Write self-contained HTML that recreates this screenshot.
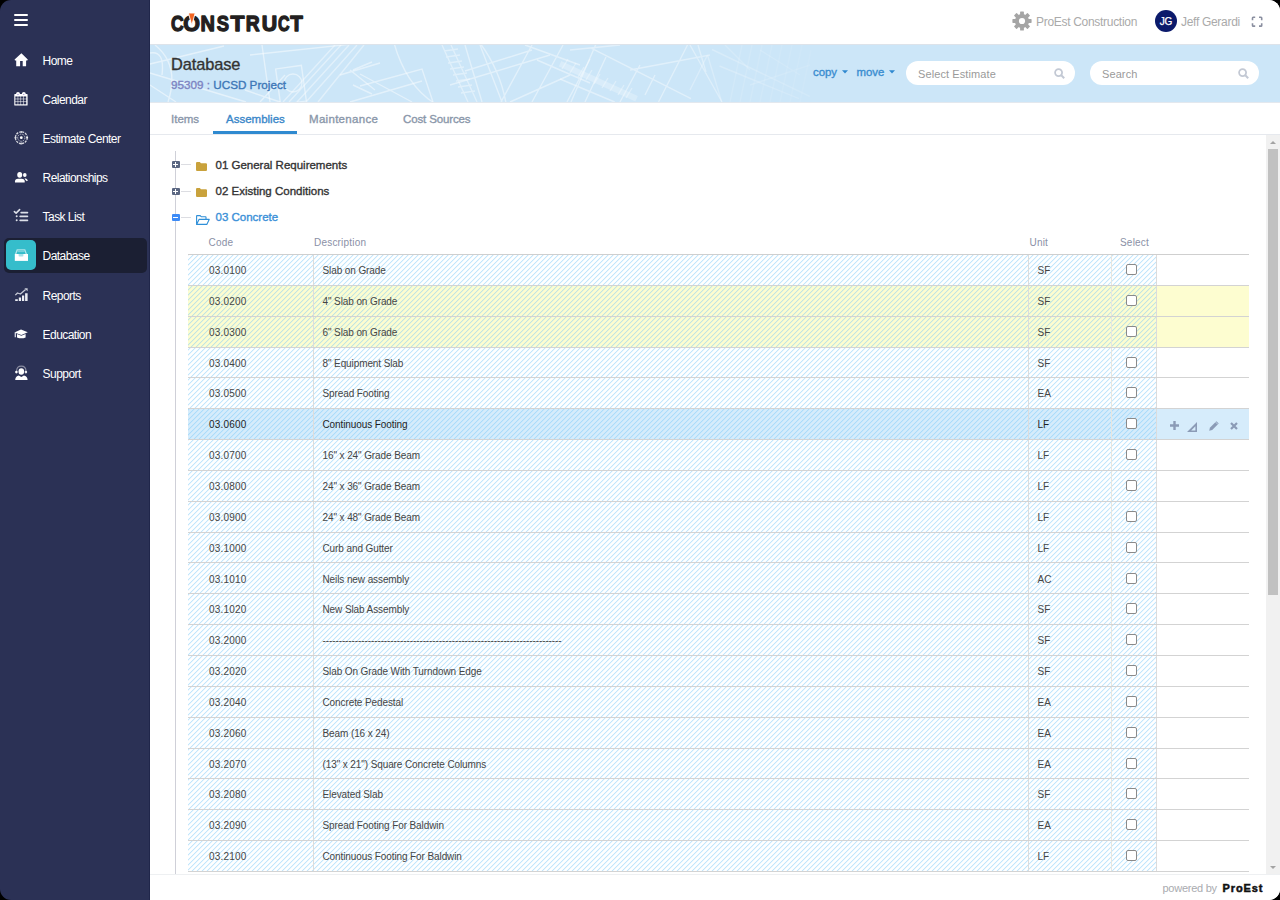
<!DOCTYPE html>
<html><head><meta charset="utf-8"><title>Database - Assemblies</title>
<style>
html,body{margin:0;padding:0;background:#000;width:1280px;height:900px;overflow:hidden}
*{box-sizing:border-box}
#app{position:absolute;left:0;top:0;width:1280px;height:900px;border-radius:11px;overflow:hidden;font-family:"Liberation Sans",sans-serif;color:#333}
#sidebar{position:absolute;left:0;top:0;width:150px;height:900px;background:#2b3155;border-right:1px solid #20264a}
.burger{position:absolute;left:13.5px;top:14px;width:14.5px;height:12px}
.burger i{position:absolute;left:0;width:14.5px;height:2.4px;background:#fff;border-radius:1px}
.nav{position:absolute;left:0;width:150px;height:30px}
.nav .ic{position:absolute;left:13px;top:0;width:16px;height:30px}
.nav .ic svg{position:absolute;left:0;top:7px}
.nav .tx{position:absolute;left:42.6px;top:1px;line-height:30px;font-size:12px;color:#fff;letter-spacing:-0.55px;white-space:nowrap}
.nav.active .bg{position:absolute;left:3.5px;top:-2.5px;width:143.5px;height:35px;background:#1b1f33;border-radius:5px}
.nav.active .tile{position:absolute;left:6px;top:0;width:30px;height:30px;background:#35bdcb;border-radius:5px}
#header{position:absolute;left:150px;top:0;width:1130px;height:44px;background:#fff}
#banner{position:absolute;left:150px;top:44px;width:1130px;height:59px;background:#cce6f8;border-top:1px solid #dde3ea;border-bottom:1px solid #e3e8ee;overflow:hidden}
#tabs{position:absolute;left:150px;top:103px;width:1130px;height:32px;background:#fff;border-bottom:1px solid #e6e9ee}
.tab{position:absolute;top:1px;height:31px;line-height:31px;font-size:11.5px;color:#8a97aa;-webkit-text-stroke:0.35px #8a97aa;white-space:nowrap}
.tab.act{color:#3a87c9;-webkit-text-stroke:0.35px #3a87c9}
.tabline{position:absolute;left:62.5px;top:28px;width:84.5px;height:3px;background:#2f8ad0}
#content{position:absolute;left:150px;top:135px;width:1116px;height:739px;background:#fff;overflow:hidden}
.tree-vline{position:absolute;left:25px;top:16px;width:1px;height:723px;background:#cfd0d8}
.tnode{position:absolute;left:0;height:20px;width:600px}
.tnode.n1{top:19.5px}.tnode.n2{top:46px}.tnode.n3{top:72px}
.pm{position:absolute;left:21.5px;top:6.5px;width:8px;height:7px;background:#5b6782;border-radius:1px}
.pm.minus{background:#3d8bf6}
.pm:before{content:"";position:absolute;left:1.5px;top:3px;width:5px;height:1px;background:#fff}
.pm.plus:after{content:"";position:absolute;left:3.5px;top:1px;width:1px;height:5px;background:#fff}
.hl{position:absolute;left:31px;top:9.5px;width:10px;height:1px;background:#dcdde2}
.fold{position:absolute;left:46px;top:7px}
.fold.open{left:46px;top:8px}
.tl{position:absolute;left:65.5px;top:0;line-height:20px;font-size:11.5px;color:#333;-webkit-text-stroke:0.35px #333;white-space:nowrap}
.tl.blue{color:#3a90d8;-webkit-text-stroke:0.35px #3a90d8}
.thead{position:absolute;left:0;top:98px;height:20px;width:1116px;font-size:10px;color:#8a90a6;letter-spacing:0.2px}
.thead span{position:absolute;top:0;line-height:20px;white-space:nowrap}
.h-code{left:58.6px}.h-desc{left:164px}.h-unit{left:879.5px}.h-sel{left:970px}
#tbl{position:absolute;left:38px;top:119px;width:1061px;height:618px;border-top:1px solid #cfcfcf}
.row{position:absolute;left:0;width:1061px;height:30.85px;border-bottom:1px solid #d3d3d3;font-size:10px;letter-spacing:-0.1px;color:#454545}
.hatch{position:absolute;left:0;top:0;width:968px;height:100%;background:repeating-linear-gradient(-45deg,rgba(150,210,245,.55) 0px,rgba(150,210,245,.55) 1.3px,transparent 1.3px,transparent 3.54px)}
.row>div.c-code,.row>div.c-desc,.row>div.c-unit,.row>div.c-sel{position:absolute;top:0;height:100%;line-height:31px;white-space:nowrap}
.c-code{left:0;width:126px;padding-left:21px;letter-spacing:0.2px;border-right:1px solid #dcdcdc}
.c-desc{left:125px;width:716px;padding-left:9.5px;border-right:1px solid #dcdcdc}
.c-unit{left:841px;width:83px;padding-left:8.6px;border-right:1px solid #e6e6e0}
.c-sel{left:924px;width:45px;border-right:1px solid #dcdcdc}
.cb{position:absolute;left:14.3px;top:9px;width:11px;height:11px;border:1px solid #8a8a8a;border-radius:2px;background:#fff}
.acts{position:absolute;left:969px;top:0;width:92px;height:100%}
.acts svg{position:absolute}
#scroll{position:absolute;left:1266px;top:135px;width:14px;height:739px;background:#f1f1f1}
.arr{position:absolute;left:3.5px;width:0;height:0;border-left:3.5px solid transparent;border-right:3.5px solid transparent}
.arr.up{top:5.5px;border-bottom:3.5px solid #a3a3a3}
.arr.down{bottom:5.5px;border-top:3.5px solid #a3a3a3}
.thumb{position:absolute;left:1.5px;top:14px;width:10.5px;height:446px;background:#c1c1c1}
#footer{position:absolute;left:150px;top:874px;width:1130px;height:26px;background:#fff;border-top:1px solid #eef0f2;white-space:nowrap}
#footer .pb{position:absolute;left:1012.5px;top:1px;line-height:25px;font-size:11px;color:#a9abb0;letter-spacing:-0.25px}
#footer .pe{position:absolute;left:1072.5px;top:1px;line-height:25px;font-size:11px;font-weight:bold;color:#111;letter-spacing:0.9px;-webkit-text-stroke:0.5px #111}
#footer .po{color:#111}

#rightbg{position:absolute;left:150px;top:0;width:1130px;height:900px;background:#fff}
#rowbg{position:absolute;left:0;top:0;width:1061px;height:620px}
#rowbg div{position:absolute;left:0;width:1061px}
#hatch{position:absolute;left:0;top:0}
.row.rb{color:#1f1f1f}

</style></head>
<body><div id="app"><div id="rightbg"></div>
<div id="sidebar">
<div class="burger"><i style="top:0"></i><i style="top:4.8px"></i><i style="top:9.6px"></i></div>
<div class="nav" style="top:44.6px"><div class="ic"><svg width="16" height="16" viewBox="0 0 16 16"><path d="M8.4 1.3L14.8 7.5L14.3 8.5H13.1V14.2H9.7V9.1H7.1V14.2H3.2V8.5H2L1.6 7.5Z" fill="#fff"/></svg></div><div class="tx">Home</div></div>
<div class="nav" style="top:83.7px"><div class="ic"><svg width="16" height="16" viewBox="0 0 16 16"><circle cx="5" cy="2.8" r="1.9" fill="#fff"/><circle cx="10.8" cy="2.8" r="1.9" fill="#fff"/><rect x="1.3" y="3.1" width="13.3" height="11.4" rx="0.6" fill="#fff"/><rect x="2.35" y="5.45" width="2.35" height="2.25" fill="#2b3155"/><rect x="2.35" y="8.25" width="2.35" height="2.25" fill="#2b3155"/><rect x="2.35" y="11.05" width="2.35" height="2.25" fill="#2b3155"/><rect x="5.20" y="5.45" width="2.35" height="2.25" fill="#2b3155"/><rect x="5.20" y="8.25" width="2.35" height="2.25" fill="#2b3155"/><rect x="5.20" y="11.05" width="2.35" height="2.25" fill="#2b3155"/><rect x="8.05" y="5.45" width="2.35" height="2.25" fill="#2b3155"/><rect x="8.05" y="8.25" width="2.35" height="2.25" fill="#2b3155"/><rect x="8.05" y="11.05" width="2.35" height="2.25" fill="#2b3155"/><rect x="10.90" y="5.45" width="2.35" height="2.25" fill="#2b3155"/><rect x="10.90" y="8.25" width="2.35" height="2.25" fill="#2b3155"/><rect x="10.90" y="11.05" width="2.35" height="2.25" fill="#2b3155"/><circle cx="5" cy="3.4" r="0.6" fill="#9a8ad0"/><circle cx="10.8" cy="3.4" r="0.6" fill="#9a8ad0"/></svg></div><div class="tx">Calendar</div></div>
<div class="nav" style="top:122.9px"><div class="ic"><svg width="16" height="16" viewBox="0 0 16 16"><g transform="translate(0.3 -0.3)"><circle cx="8" cy="8" r="5.9" fill="none" stroke="#fff" stroke-opacity="0.8" stroke-width="1.3" stroke-dasharray="2.2 0.9"/><circle cx="8" cy="8" r="3.6" fill="none" stroke="#fff" stroke-opacity="0.65" stroke-width="1" stroke-dasharray="1.6 0.9"/><circle cx="8" cy="8" r="1.4" fill="#fff"/><path d="M8 1.2V3.2M8 12.8V14.8M1.2 8H3.2M12.8 8H14.8" stroke="#fff" stroke-opacity="0.8" stroke-width="1.2"/></g></svg></div><div class="tx">Estimate Center</div></div>
<div class="nav" style="top:162.1px"><div class="ic"><svg width="16" height="16" viewBox="0 0 16 16"><ellipse cx="6.7" cy="5.8" rx="2.5" ry="2.9" fill="#fff"/><path d="M2 13.6V12.2Q2 9.7 5 9.7H8.6Q11.7 9.7 11.7 12.2V13.6Z" fill="#fff"/><ellipse cx="11.8" cy="6" rx="1.8" ry="2.1" fill="#fff"/><path d="M11.6 9.3Q13.6 9.4 14.6 11.1Q15 12.2 13.9 12.2Q13 11.6 12.1 10.6Z" fill="#fff"/></svg></div><div class="tx">Relationships</div></div>
<div class="nav" style="top:201.2px"><div class="ic"><svg width="16" height="16" viewBox="0 0 16 16"><g fill="none" stroke="#dcdfe8"><path d="M1.4 3.6L3.1 5.1L6.6 1.6" stroke-width="1.6" stroke-linecap="round" stroke-linejoin="round"/><path d="M8.2 4.6H14.4M7.2 8.3H14.4M7.2 12.3H14.4" stroke-width="1.8" stroke-linecap="round"/></g><circle cx="3.7" cy="8.3" r="1" fill="#dcdfe8"/><circle cx="3.7" cy="12.3" r="1" fill="#dcdfe8"/></svg></div><div class="tx">Task List</div></div>
<div class="nav active" style="top:240.4px"><div class="bg"></div><div class="tile"></div><div class="ic"><svg width="16" height="16" viewBox="0 0 16 16"><path d="M2.6 7.2L4.2 2.8H11.8L13.4 7.2" fill="none" stroke="#fff" stroke-opacity="0.6" stroke-width="1.3"/><path d="M4.6 4.6H11.4" stroke="#fff" stroke-opacity="0.35" stroke-width="1"/><path d="M1.8 6.9H15V13.9H1.8Z" fill="#fff"/><path d="M5.6 6.9V8.8Q5.6 9.6 6.4 9.6H9.6Q10.4 9.6 10.4 8.8V6.9Z" fill="#35bdcb" opacity="0.45"/></svg></div><div class="tx">Database</div></div>
<div class="nav" style="top:279.6px"><div class="ic"><svg width="16" height="16" viewBox="0 0 16 16"><path d="M2.2 12.3H4.8V14H2.2ZM5.8 10.6H8.1V14H5.8ZM9 8.4H11.2V14H9ZM12.1 6.3H14.6V14H12.1Z" fill="#eceef4"/><path d="M2.3 8.1L4.5 6L7.4 7L12.6 2.6" fill="none" stroke="#c9ccd8" stroke-width="1.3" stroke-linejoin="round"/><path d="M11.4 1.2H14.6V4.2Z" fill="#c9ccd8"/></svg></div><div class="tx">Reports</div></div>
<div class="nav" style="top:318.8px"><div class="ic"><svg width="16" height="16" viewBox="0 0 16 16"><path d="M1.4 6.6L8 3.6L14.8 6.3L8.4 9Z" fill="#fff"/><path d="M4 8.1L8.3 9.7L12.6 8.1V11.4Q8.3 13.2 4 11.4Z" fill="#fff"/><path d="M2.3 6.8V11.2" stroke="#d8dbe6" stroke-width="1.3"/></svg></div><div class="tx">Education</div></div>
<div class="nav" style="top:357.9px"><div class="ic"><svg width="16" height="16" viewBox="0 0 16 16"><ellipse cx="8.3" cy="6.5" rx="2.8" ry="3.3" fill="#fff"/><path d="M3.6 6.2Q3.6 1.1 8.3 1.1Q13 1.1 13 6.2" fill="none" stroke="#fff" stroke-opacity="0.45" stroke-width="1.1"/><circle cx="3.4" cy="7.1" r="1.3" fill="#fff"/><circle cx="12.9" cy="7.1" r="1.3" fill="#fff" opacity="0.9"/><path d="M2.2 15.1Q2.4 11.5 5.8 10.6L8.3 12.1L10.9 10.6Q14.4 11.5 14.6 15.1Z" fill="#fff"/></svg></div><div class="tx">Support</div></div>
</div>

<div id="header">
<svg style="position:absolute;left:0;top:0" width="200" height="44" viewBox="0 0 200 44"><g font-family="Liberation Sans" font-weight="bold" font-size="21.98" fill="#231f20" stroke="#231f20" stroke-width="1.3" stroke-linejoin="round"><text transform="translate(20.93 31.05) scale(0.801 1)">C</text><text transform="translate(33.37 31.05) scale(0.977 1)">O</text><text transform="translate(50.51 31.05) scale(0.907 1)">N</text><text transform="translate(66.72 31.05) scale(0.837 1)">S</text><text transform="translate(80.40 31.05) scale(1.037 1)">T</text><text transform="translate(95.86 31.05) scale(0.877 1)">R</text><text transform="translate(111.67 31.05) scale(0.971 1)">U</text><text transform="translate(128.09 31.05) scale(0.732 1)">C</text><text transform="translate(140.32 31.05) scale(0.936 1)">T</text></g><path d="M38.4 13H45.2L42.1 24.2H41.5Z" fill="#f26522" stroke="#fff" stroke-width="0.9"/></svg>
<svg style="position:absolute;left:862px;top:11px" width="20" height="20" viewBox="-10 -10 20 20"><g fill="#a5a5a5"><circle r="7.1"/><rect x="-1.9" y="-9.6" width="3.8" height="19.2" rx="0.6"/><rect x="-1.9" y="-9.6" width="3.8" height="19.2" rx="0.6" transform="rotate(45)"/><rect x="-1.9" y="-9.6" width="3.8" height="19.2" rx="0.6" transform="rotate(90)"/><rect x="-1.9" y="-9.6" width="3.8" height="19.2" rx="0.6" transform="rotate(135)"/></g><circle r="3.1" fill="#fff"/></svg>
<span style="position:absolute;left:886px;top:1px;line-height:42px;font-size:12px;color:#aaaaaa;white-space:nowrap;letter-spacing:-0.3px">ProEst Construction</span>
<div style="position:absolute;left:1005px;top:10px;width:22px;height:22px;border-radius:50%;background:#0b1a6b;color:#fff;font-size:10px;line-height:23.5px;text-align:center;letter-spacing:-0.2px;-webkit-text-stroke:0.25px #fff">JG</div>
<span style="position:absolute;left:1031px;top:1.5px;line-height:41px;font-size:12px;color:#aaaaaa;white-space:nowrap;letter-spacing:-0.3px">Jeff Gerardi</span>
<svg style="position:absolute;left:1101px;top:15.5px" width="12" height="11" viewBox="0 0 12 11"><path d="M1.5 4.2V2Q1.5 1.3 2.2 1.3H4.2M8 1.3H10Q10.7 1.3 10.7 2V4.2M10.7 7.2V9.4Q10.7 10.1 10 10.1H8M4.2 10.1H2.2Q1.5 10.1 1.5 9.4V7.2" fill="none" stroke="#8a8fa0" stroke-width="1.6"/></svg>
</div>
<div id="banner">
<svg style="position:absolute;left:0;top:0" width="662" height="57" viewBox="0 0 662 57">
<defs><linearGradient id="bfade" x1="0" y1="0" x2="662" y2="0" gradientUnits="userSpaceOnUse"><stop offset="0" stop-color="#fff" stop-opacity="1"/><stop offset="0.8" stop-color="#fff" stop-opacity="0.8"/><stop offset="1" stop-color="#fff" stop-opacity="0.3"/></linearGradient>
<mask id="bmask"><rect width="662" height="57" fill="url(#bfade)"/></mask><filter id="bblur" x="-5%" y="-20%" width="110%" height="140%"><feGaussianBlur stdDeviation="0.45"/></filter></defs>
<g mask="url(#bmask)"><g filter="url(#bblur)" fill="none" stroke="#fff" stroke-opacity="0.5" stroke-width="1.4">
<path d="M0 19L74 1M0 40L26 57M0 28L96 57M5 0Q30 20 18 57M0 8Q15 5 12 30M112 0L120 57M203 25L222 17M203 40L222 49"/>
<path d="M133 57L185 0M139 57L191 0M147 57L199 0M156 57L207 0M168 57L214 0" stroke-opacity="0.45"/>
<circle cx="143" cy="38" r="9"/><rect x="128" y="22" width="26" height="36" transform="rotate(-8 141 40)"/>
<path d="M110 57L135 30M100 10L240 -5M190 30L230 18M200 25L225 45M95 45L130 57"/>
<path d="M244 -2Q256 40 284 58"/>
<path d="M210 29L262 57M210 41L272 24L283 57M200 57L272 36"/>
<path d="M292 0L318 57M301 0L327 57M294 6L308 4M296 12L310 10M298 18L312 16M300 24L314 22M303 30L317 28M306 36L320 34M308 42L322 40M311 48L325 46" stroke-opacity="0.45"/>
<path d="M315 26L382 5M300 40L400 10M315 0L332 57M330 0L352 57M330 -2Q350 25 356 58M351 57L382 0M375 0L430 20M387 15L440 38M382 57L413 0M417 57L440 14M360 57L420 30"/>
<path d="M410 18.7L486.6 53.7" stroke-width="6" stroke-opacity="0.3"/>
<path d="M412 24L418 14M420 28L426 18M428 32L434 22M436 35L442 25M444 39L450 29M452 43L458 33M460 46L466 36M468 50L474 40M476 53L482 43" stroke-opacity="0.4"/>
<path d="M441.7 3.4L541 53.7M410 34L464.7 57M421 57L446 -1M435 57L456 12M508.5 57L538 -1M548 0L556 27M540 0L572 57M470 57L490 20M495 50L505 30M420 5L470 0M480 25L560 10"/>
<path d="M562 4.5L660 51.5M569.5 21L649 53.7M540 45L557.5 10M557.5 10L571.7 57" stroke-opacity="0.38"/>
<path d="M580 57L592 0M590 57L602 0M600 57L612 0M610 57L622 0M620 57L632 0M630 57L642 0M640 57L652 0M650 57L661 5" stroke-opacity="0.22"/>
<path d="M575 0L600 25M610 5L650 30M600 40L660 20" stroke-opacity="0.3"/>
</g></g></svg>
<div style="position:absolute;left:21px;top:0;line-height:38px;font-size:16.4px;color:#333;white-space:nowrap;-webkit-text-stroke:0.35px #333;letter-spacing:-0.1px">Database</div>
<div style="position:absolute;left:21px;top:31px;line-height:17px;font-size:11.7px;white-space:nowrap"><span style="color:#7d83c2;-webkit-text-stroke:0.35px #7d83c2">95309 :</span> <span style="color:#3d77b7;-webkit-text-stroke:0.35px #3d77b7">UCSD Project</span></div>
<div style="position:absolute;left:663px;top:16px;line-height:22px;font-size:11.4px;color:#3a8dd0;-webkit-text-stroke:0.35px #3a8dd0;white-space:nowrap"><span style="position:absolute;left:0;top:0">copy</span><span style="position:absolute;left:43.5px;top:0">move</span></div>
<svg style="position:absolute;left:692px;top:25px" width="6" height="4" viewBox="0 0 6 4"><path d="M0 0.2H6L3 3.4Z" fill="#2f89d0"/></svg>
<svg style="position:absolute;left:738.6px;top:25px" width="6" height="4" viewBox="0 0 6 4"><path d="M0 0.2H6L3 3.4Z" fill="#2f89d0"/></svg>
<div style="position:absolute;left:756px;top:16px;width:168.5px;height:24.3px;border-radius:12px;background:#fff">
<span style="position:absolute;left:12px;top:0.8px;line-height:24px;font-size:11px;color:#9a9a9a;white-space:nowrap;letter-spacing:0.1px">Select Estimate</span>
<svg style="position:absolute;left:148px;top:7px" width="11" height="11" viewBox="0 0 11 11"><circle cx="4.6" cy="4.6" r="3.5" fill="none" stroke="#c3c9d4" stroke-width="1.8"/><path d="M7.3 7.3L10.2 10.2" stroke="#c3c9d4" stroke-width="2"/></svg></div>
<div style="position:absolute;left:940px;top:16px;width:168.5px;height:24.3px;border-radius:12px;background:#fff">
<span style="position:absolute;left:12px;top:0.8px;line-height:24px;font-size:11px;color:#9a9a9a;white-space:nowrap;letter-spacing:0.1px">Search</span>
<svg style="position:absolute;left:148px;top:7px" width="11" height="11" viewBox="0 0 11 11"><circle cx="4.6" cy="4.6" r="3.5" fill="none" stroke="#c3c9d4" stroke-width="1.8"/><path d="M7.3 7.3L10.2 10.2" stroke="#c3c9d4" stroke-width="2"/></svg></div>
</div>
<div id="tabs">
<span class="tab" style="left:21px">Items</span>
<span class="tab act" style="left:76px">Assemblies</span>
<span class="tab" style="left:159px;letter-spacing:0.3px">Maintenance</span>
<span class="tab" style="left:253px;letter-spacing:-0.13px">Cost Sources</span>
<div class="tabline"></div>
</div>

<div id="content">
<div class="tree-vline"></div>
<div class="tnode n1"><span class="pm plus"></span><span class="hl"></span><svg class="fold" width="11" height="9" viewBox="0 0 12 10" preserveAspectRatio="none"><path d="M0 1.2Q0 0 1.2 0H4.2L5.4 1.4H10.8Q12 1.4 12 2.6V8.8Q12 10 10.8 10H1.2Q0 10 0 8.8Z" fill="#c9a23c"/></svg><span class="tl">01 General Requirements</span></div>
<div class="tnode n2"><span class="pm plus"></span><span class="hl"></span><svg class="fold" width="11" height="9" viewBox="0 0 12 10" preserveAspectRatio="none"><path d="M0 1.2Q0 0 1.2 0H4.2L5.4 1.4H10.8Q12 1.4 12 2.6V8.8Q12 10 10.8 10H1.2Q0 10 0 8.8Z" fill="#c9a23c"/></svg><span class="tl">02 Existing Conditions</span></div>
<div class="tnode n3"><span class="pm minus"></span><span class="hl"></span><svg class="fold open" width="14" height="10" viewBox="0 0 14 10"><path d="M0.6 9.4V1Q0.6 0.6 1 0.6H4.2L5.4 1.8H9.6Q10 1.8 10 2.2V4M0.6 9.4L3 4.4H13.2L10.8 9.4Z" fill="none" stroke="#2f8fd8" stroke-width="1.1" stroke-linejoin="round"/></svg><span class="tl blue">03 Concrete</span></div>
<div class="thead"><span class="h-code">Code</span><span class="h-desc">Description</span><span class="h-unit">Unit</span><span class="h-sel">Select</span></div>
<div id="tbl">
<div id="rowbg"><div style="top:30.85px;height:61.7px;background:#fdfdd0"></div><div style="top:154.25px;height:30.85px;background:#d6ecfb;width:1061px"></div></div>
<svg id="hatch" width="969" height="617" viewBox="0 0 969 617" shape-rendering="crispEdges"><defs><pattern id="hp" width="5" height="5" patternUnits="userSpaceOnUse" x="0" y="0"><rect x="4" y="0" width="1" height="1" fill="rgb(120,200,248)" fill-opacity="0.45"/><rect x="3" y="1" width="1" height="1" fill="rgb(120,200,248)" fill-opacity="0.45"/><rect x="2" y="2" width="1" height="1" fill="rgb(120,200,248)" fill-opacity="0.45"/><rect x="1" y="3" width="1" height="1" fill="rgb(120,200,248)" fill-opacity="0.45"/><rect x="0" y="4" width="1" height="1" fill="rgb(120,200,248)" fill-opacity="0.45"/><rect x="0" y="0" width="1" height="1" fill="rgb(120,200,248)" fill-opacity="0.14"/><rect x="4" y="1" width="1" height="1" fill="rgb(120,200,248)" fill-opacity="0.14"/><rect x="3" y="2" width="1" height="1" fill="rgb(120,200,248)" fill-opacity="0.14"/><rect x="2" y="3" width="1" height="1" fill="rgb(120,200,248)" fill-opacity="0.14"/><rect x="1" y="4" width="1" height="1" fill="rgb(120,200,248)" fill-opacity="0.14"/><rect x="3" y="0" width="1" height="1" fill="rgb(120,200,248)" fill-opacity="0.06"/><rect x="2" y="1" width="1" height="1" fill="rgb(120,200,248)" fill-opacity="0.06"/><rect x="1" y="2" width="1" height="1" fill="rgb(120,200,248)" fill-opacity="0.06"/><rect x="0" y="3" width="1" height="1" fill="rgb(120,200,248)" fill-opacity="0.06"/><rect x="4" y="4" width="1" height="1" fill="rgb(120,200,248)" fill-opacity="0.06"/></pattern></defs><rect width="969" height="617" fill="url(#hp)"/></svg>
<div class="row rw" style="top:0.00px"><div class="c-code">03.0100</div><div class="c-desc">Slab on Grade</div><div class="c-unit">SF</div><div class="c-sel"><span class="cb"></span></div></div>
<div class="row ry" style="top:30.85px"><div class="c-code">03.0200</div><div class="c-desc">4&quot; Slab on Grade</div><div class="c-unit">SF</div><div class="c-sel"><span class="cb"></span></div></div>
<div class="row ry" style="top:61.70px"><div class="c-code">03.0300</div><div class="c-desc">6&quot; Slab on Grade</div><div class="c-unit">SF</div><div class="c-sel"><span class="cb"></span></div></div>
<div class="row rw" style="top:92.55px"><div class="c-code">03.0400</div><div class="c-desc">8&quot; Equipment Slab</div><div class="c-unit">SF</div><div class="c-sel"><span class="cb"></span></div></div>
<div class="row rw" style="top:123.40px"><div class="c-code">03.0500</div><div class="c-desc">Spread Footing</div><div class="c-unit">EA</div><div class="c-sel"><span class="cb"></span></div></div>
<div class="row rb" style="top:154.25px"><div class="c-code">03.0600</div><div class="c-desc">Continuous Footing</div><div class="c-unit">LF</div><div class="c-sel"><span class="cb"></span></div><div class="acts"><svg style="left:13px;top:12px" width="9" height="9" viewBox="0 0 9 9"><path d="M3.3 0H5.7V3.3H9V5.7H5.7V9H3.3V5.7H0V3.3H3.3Z" fill="#8b9bb6"/></svg><svg style="left:30px;top:12.5px" width="10" height="10" viewBox="0 0 10 10"><path d="M10 0V10H0ZM8.4 4.2V8.4H4.2Z" fill="#8b9bb6" fill-rule="evenodd"/></svg><svg style="left:52px;top:12px" width="10" height="10" viewBox="0 0 10 10"><path d="M7.4 0.3L9.7 2.6L3.2 9.1L0.2 9.8L0.9 6.8Z" fill="#8b9bb6"/><path d="M6.6 1.1L8.9 3.4" stroke="#d6ecfb" stroke-width="0.7"/></svg><svg style="left:73px;top:13px" width="8" height="8" viewBox="0 0 8 8"><path d="M1 1L7 7M7 1L1 7" stroke="#8b9bb6" stroke-width="2.2" stroke-linecap="butt"/></svg></div></div>
<div class="row rw" style="top:185.10px"><div class="c-code">03.0700</div><div class="c-desc">16&quot; x 24&quot; Grade Beam</div><div class="c-unit">LF</div><div class="c-sel"><span class="cb"></span></div></div>
<div class="row rw" style="top:215.95px"><div class="c-code">03.0800</div><div class="c-desc">24&quot; x 36&quot; Grade Beam</div><div class="c-unit">LF</div><div class="c-sel"><span class="cb"></span></div></div>
<div class="row rw" style="top:246.80px"><div class="c-code">03.0900</div><div class="c-desc">24&quot; x 48&quot; Grade Beam</div><div class="c-unit">LF</div><div class="c-sel"><span class="cb"></span></div></div>
<div class="row rw" style="top:277.65px"><div class="c-code">03.1000</div><div class="c-desc">Curb and Gutter</div><div class="c-unit">LF</div><div class="c-sel"><span class="cb"></span></div></div>
<div class="row rw" style="top:308.50px"><div class="c-code">03.1010</div><div class="c-desc">Neils new assembly</div><div class="c-unit">AC</div><div class="c-sel"><span class="cb"></span></div></div>
<div class="row rw" style="top:339.35px"><div class="c-code">03.1020</div><div class="c-desc">New Slab Assembly</div><div class="c-unit">SF</div><div class="c-sel"><span class="cb"></span></div></div>
<div class="row rw" style="top:370.20px"><div class="c-code">03.2000</div><div class="c-desc">--------------------------------------------------------------------------</div><div class="c-unit">SF</div><div class="c-sel"><span class="cb"></span></div></div>
<div class="row rw" style="top:401.05px"><div class="c-code">03.2020</div><div class="c-desc">Slab On Grade With Turndown Edge</div><div class="c-unit">SF</div><div class="c-sel"><span class="cb"></span></div></div>
<div class="row rw" style="top:431.90px"><div class="c-code">03.2040</div><div class="c-desc">Concrete Pedestal</div><div class="c-unit">EA</div><div class="c-sel"><span class="cb"></span></div></div>
<div class="row rw" style="top:462.75px"><div class="c-code">03.2060</div><div class="c-desc">Beam (16 x 24)</div><div class="c-unit">EA</div><div class="c-sel"><span class="cb"></span></div></div>
<div class="row rw" style="top:493.60px"><div class="c-code">03.2070</div><div class="c-desc">(13&quot; x 21&quot;) Square Concrete Columns</div><div class="c-unit">EA</div><div class="c-sel"><span class="cb"></span></div></div>
<div class="row rw" style="top:524.45px"><div class="c-code">03.2080</div><div class="c-desc">Elevated Slab</div><div class="c-unit">SF</div><div class="c-sel"><span class="cb"></span></div></div>
<div class="row rw" style="top:555.30px"><div class="c-code">03.2090</div><div class="c-desc">Spread Footing For Baldwin</div><div class="c-unit">EA</div><div class="c-sel"><span class="cb"></span></div></div>
<div class="row rw" style="top:586.15px"><div class="c-code">03.2100</div><div class="c-desc">Continuous Footing For Baldwin</div><div class="c-unit">LF</div><div class="c-sel"><span class="cb"></span></div></div>
</div>
</div>
<div id="scroll"><div class="arr up"></div><div class="thumb"></div><div class="arr down"></div></div>
<div id="footer"><span class="pb">powered by</span><span class="pe">Pr<span class="po">o</span>Est</span></div>
</div></body></html>
